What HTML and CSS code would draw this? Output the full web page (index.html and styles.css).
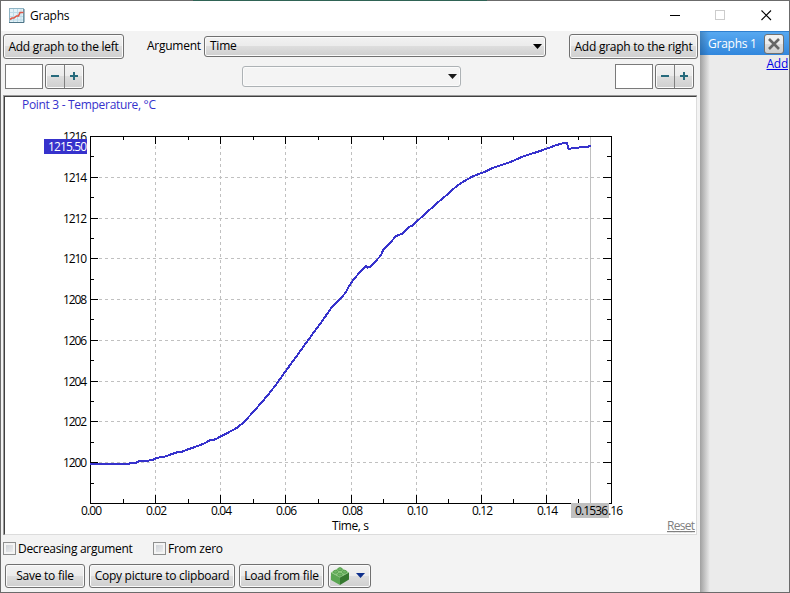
FILE: index.html
```html
<!DOCTYPE html>
<html lang="en">
<head>
    <meta charset="UTF-8">
    <title>Graphs</title>
    <link rel="stylesheet" href="styles.css">
</head>
<body>
    <div class="window">
        <div class="titlebar">
            <svg class="app-icon" width="16" height="16" viewBox="0 0 16 16">
                <rect x="0.5" y="0.5" width="14" height="14" fill="#e4f2f8" stroke="#8fb4c4"/>
                <path d="M4.5 1v13M8.5 1v13M12 1v13M1 4.5h13M1 8.5h13M1 12h13" stroke="#bddbe8" fill="none"/>
                <path d="M0 14.5h15V1" stroke="#4f7688" fill="none"/>
                <path d="M1 11.500l2-1.500h2l2.500-2h2l1.500-3.500h3.500" stroke="#dd5a48" stroke-width="1.600" fill="none"/>
            </svg>
            <span class="title">Graphs</span>
            <svg class="window-buttons" width="110" height="16" viewBox="0 0 110 16" fill="none">
                <path d="M0 7.500h10" stroke="#000"/>
                <rect x="45.500" y="2.500" width="9" height="9" stroke="#ccc"/>
                <path d="M91.500 2.500l9.500 9.500M101 2.500l-9.500 9.500" stroke="#000" stroke-width="1.100"/>
            </svg>
        </div>
        <div class="content">
            <div class="main">
                <div class="toolbar">
                    <button class="btn add-left">Add graph to the left</button>
                    <label class="argument">Argument</label>
                    <div class="combo">
                        <span>Time</span>
                        <svg width="9" height="5" viewBox="0 0 9 5"><path d="M0 0h9L4.500 5z" fill="#000"/></svg>
                    </div>
                    <button class="btn add-right">Add graph to the right</button>
                </div>
                <div class="toolbar second">
                    <div class="box"></div>
                    <div class="spin">
                        <svg width="18" height="23" viewBox="0 0 18 23"><path d="M5 11h8" stroke="#266a7c" stroke-width="2"/></svg>
                        <svg width="18" height="23" viewBox="0 0 18 23"><path d="M5 11h8M9 7v8" stroke="#266a7c" stroke-width="2"/></svg>
                    </div>
                    <div class="combo disabled">
                        <span></span>
                        <svg width="9" height="5" viewBox="0 0 9 5"><path d="M0 0h9L4.500 5z" fill="#1a1a1a"/></svg>
                    </div>
                    <div class="box"></div>
                    <div class="spin">
                        <svg width="18" height="23" viewBox="0 0 18 23"><path d="M5 11h8" stroke="#266a7c" stroke-width="2"/></svg>
                        <svg width="18" height="23" viewBox="0 0 18 23"><path d="M5 11h8M9 7v8" stroke="#266a7c" stroke-width="2"/></svg>
                    </div>
                </div>
                <div class="graph">
                    <svg class="chart" width="691" height="437" viewBox="5 97 691 437">
                        <text class="series" x="22" y="109" textLength="134">Point 3 - Temperature, °C</text>

                        <!-- grid -->
                        <path class="grid" d="M93 177.500H611M93 218.500H611M93 258.500H611M93 299.500H611M93 340.500H611M93 381.500H611M93 421.500H611M93 462.500H611"/>
                        <path class="grid" d="M155.500 140V503M220.500 140V503M285.500 140V503M351.500 140V503M416.500 140V503M481.500 140V503M546.500 140V503"/>

                        <!-- cursor -->
                        <path class="cursor" d="M590.500 137V503"/>

                        <!-- axes and ticks -->
                        <path class="axis" d="M90.500 136.500H611.500V503.500H90.500z"/>
                        <path class="axis" d="M91 177.500h7M91 218.500h7M91 258.500h7M91 299.500h7M91 340.500h7M91 381.500h7M91 421.500h7M91 462.500h7"/>
                        <path class="axis" d="M91 156.500h3M91 197.500h3M91 238.500h3M91 279.500h3M91 319.500h3M91 360.500h3M91 401.500h3M91 442.500h3M91 483.500h3"/>
                        <path class="axis" d="M611 177.500h-8M611 218.500h-8M611 258.500h-8M611 299.500h-8M611 340.500h-8M611 381.500h-8M611 421.500h-8M611 462.500h-8"/>
                        <path class="axis" d="M611 156.500h-4M611 197.500h-4M611 238.500h-4M611 279.500h-4M611 319.500h-4M611 360.500h-4M611 401.500h-4M611 442.500h-4M611 483.500h-4"/>
                        <path class="axis" d="M155.500 137v7M220.500 137v7M285.500 137v7M351.500 137v7M416.500 137v7M481.500 137v7M546.500 137v7"/>
                        <path class="axis" d="M123.500 137v3M188.500 137v3M253.500 137v3M318.500 137v3M383.500 137v3M448.500 137v3M513.500 137v3M578.500 137v3"/>
                        <path class="axis" d="M155.500 503v-8M220.500 503v-8M285.500 503v-8M351.500 503v-8M416.500 503v-8M481.500 503v-8M546.500 503v-8"/>
                        <path class="axis" d="M123.500 503v-4M188.500 503v-4M253.500 503v-4M318.500 503v-4M383.500 503v-4M448.500 503v-4M513.500 503v-4M578.500 503v-4"/>

                        <polyline class="curve" points="90,464 126,464 131,463.300 136,462.700 139,461.300 147,461 153,459.700 157,457.700 164,457 170,454.700 177,452.300 182,451.700 188,449.300 195,447 203,444 210,440.300 215.700,439.300 220.700,436.300 228,432.700 236.700,428 243,423 250,415.500 258,406.500 266.700,396.500 275,386 285,372 296.700,356 308,340.300 320,324 331.700,307.500 340,299 346,292.300 348.500,287 352,281.500 358.300,274 365.700,266 367.500,267.700 370.700,266.500 373.300,263.500 380.700,255.700 383.300,250 390,243 396,236 401.700,234 410,226.500 412.700,225.500 420,218.500 430,209.500 438.300,202 446.700,195 456.700,186 463.300,181.700 472,176.700 486.700,171 491.700,168.300 511.700,161.500 521.700,157 540,151 556.700,145 563,143.300 567,143 568.500,149 573,148 587,146.800 591,146"/>

                        <g class="labels">
                            <text x="63" y="141" textLength="24">1216</text>
                            <rect x="44" y="139" width="43" height="15" fill="#3632cc"/>
                            <text class="value" x="48" y="151" textLength="39">1215.50</text>
                            <text x="63" y="182" textLength="24">1214</text>
                            <text x="63" y="223" textLength="24">1212</text>
                            <text x="63" y="263" textLength="24">1210</text>
                            <text x="63" y="304" textLength="24">1208</text>
                            <text x="63" y="345" textLength="24">1206</text>
                            <text x="63" y="386" textLength="24">1204</text>
                            <text x="63" y="426" textLength="24">1202</text>
                            <text x="63" y="467" textLength="24">1200</text>

                            <text x="81" y="515" textLength="21">0.00</text>
                            <text x="146" y="515" textLength="21">0.02</text>
                            <text x="211" y="515" textLength="21">0.04</text>
                            <text x="276" y="515" textLength="21">0.06</text>
                            <text x="342" y="515" textLength="21">0.08</text>
                            <text x="407" y="515" textLength="21">0.10</text>
                            <text x="472" y="515" textLength="21">0.12</text>
                            <text x="537" y="515" textLength="21">0.14</text>
                            <rect x="571" y="503" width="38" height="15" fill="#c0c0c0"/>
                            <text x="575" y="515" textLength="33">0.1536</text>
                            <text x="608" y="515" textLength="15">.16</text>
                            <text x="332" y="530" textLength="37">Time, s</text>
                        </g>
                        <text class="reset" x="667" y="530" textLength="28">Reset</text>
                    </svg>
                </div>
                <div class="options">
                    <label class="check"><i></i><span class="decreasing">Decreasing argument</span></label>
                    <label class="check"><i></i><span>From zero</span></label>
                </div>
                <div class="actions">
                    <button class="btn save">Save to file</button>
                    <button class="btn copy">Copy picture to clipboard</button>
                    <button class="btn load">Load from file</button>
                    <button class="btn brick">
                        <svg width="40" height="20" viewBox="0 0 40 20">
                            <path d="M1 6.500L10 1l9 5.500-9 5z" fill="#8ecb80"/>
                            <path d="M1 6.500l9 5V19l-9-5z" fill="#5ba653"/>
                            <path d="M19 6.500l-9 5V19l9-5.500z" fill="#35782f"/>
                            <g fill="#70b766" stroke="#438b3c" stroke-width="0.600">
                                <ellipse cx="10" cy="3.200" rx="2.200" ry="1.500"/>
                                <ellipse cx="5.500" cy="5.800" rx="2.200" ry="1.500"/>
                                <ellipse cx="14.500" cy="5.800" rx="2.200" ry="1.500"/>
                                <ellipse cx="10" cy="8.600" rx="2.200" ry="1.500"/>
                            </g>
                            <path d="M26 7h9l-4.500 5z" fill="#0e2f8c"/>
                        </svg>
                    </button>
                </div>
            </div>
            <div class="side">
                <div class="tab">
                    <span>Graphs 1</span>
                    <div class="close">
                        <svg width="12" height="12" viewBox="0 0 12 12"><path d="M1 1l10 10M11 1L1 11" stroke="#666" stroke-width="2.600"/></svg>
                    </div>
                </div>
                <a class="add">Add</a>
            </div>
        </div>
    </div>
</body>
</html>
```
FILE: styles.css
```css
* {
    box-sizing: border-box;
}
body {
    margin: 0;
    font-family: "Open Sans", "Noto Sans", sans-serif;
    font-size: 12px;
    letter-spacing: -0.25px;
    color: #000;
    white-space: nowrap;
}
.window {
    width: 790px;
    height: 593px;
    border: 1px solid #6b6b6b;
    border-top: 0;
    display: flex;
    flex-direction: column;
    overflow: hidden;
}
.titlebar {
    height: 31px;
    background: linear-gradient(90deg, #6b6b6b 192px, #2f6355 192px, #2f6355 486px, #6b6b6b 486px) top / 100% 1px no-repeat #fff;
    display: flex;
    align-items: center;
    padding: 0 9px 0 8px;
}
.title {
    margin-left: 5px;
    flex: 1;
}
.content {
    flex: 1;
    display: flex;
    min-height: 0;
}
.main {
    width: 699px;
    background: #f3f3f3;
    display: flex;
    flex-direction: column;
}
.toolbar {
    height: 29px;
    padding: 2px 2px 0 2px;
    display: flex;
    align-items: center;
    flex-shrink: 0;
}
.second {
    height: 35px;
    padding: 0 6px 3px 4px;
}
.btn {
    font: inherit;
    letter-spacing: inherit;
    height: 25px;
    padding: 0 0 1px;
    border: 1px solid #707070;
    border-radius: 3px;
    background: linear-gradient(#f2f2f2 0, #ebebeb 50%, #dddddd 50%, #cfcfcf 100%);
    box-shadow: inset 0 0 0 1px #fbfbfb;
    color: #000;
}
.add-left {
    width: 121px;
}
.argument {
    margin-left: 23px;
    width: 57px;
    padding-bottom: 2px;
}
.combo {
    width: 342px;
    height: 21px;
    border: 1px solid #707070;
    border-radius: 3px;
    background: linear-gradient(#f2f2f2 0, #ebebeb 50%, #dddddd 50%, #cfcfcf 100%);
    box-shadow: inset 0 0 0 1px #fbfbfb;
    display: flex;
    align-items: center;
    justify-content: space-between;
    padding: 0 3px 0 5px;
}
.combo span {
    padding-bottom: 2px;
}
.combo.disabled {
    width: 219px;
    margin: 0 154px 0 158px;
    border-color: #adb2b5;
    background: #f4f4f4;
}
.add-right {
    width: 129px;
    margin-left: auto;
}
.box {
    width: 38px;
    height: 25px;
    border: 1px solid #7a7a7a;
    background: #fff;
    margin-right: 2px;
}
.spin {
    width: 39px;
    height: 25px;
    border: 1px solid #707070;
    border-radius: 3px;
    background: linear-gradient(#f2f2f2 0, #ebebeb 50%, #dddddd 50%, #cfcfcf 100%);
    box-shadow: inset 0 0 0 1px #fbfbfb;
    display: flex;
}
.spin svg + svg {
    border-left: 1px solid #808080;
    width: 19px;
}
.graph {
    width: 694px;
    height: 440px;
    margin-left: 2px;
    border: 1px solid #9a9a9a;
    border-right: 0;
    border-bottom: 0;
    flex-shrink: 0;
}
.chart {
    display: block;
    box-sizing: content-box;
    background: #fff;
    border: 1px solid #404040;
    border-right-color: #dcdcdc;
    border-bottom-color: #dcdcdc;
}
.chart text {
    letter-spacing: 0;
}
.series {
    fill: #3632cc;
}
.grid {
    stroke: #c0c0c0;
    stroke-dasharray: 3 3;
    fill: none;
    shape-rendering: crispEdges;
}
.cursor {
    stroke: #c0c0c0;
}
.axis {
    stroke: #000;
    fill: none;
    shape-rendering: crispEdges;
}
.curve {
    stroke: #3632cc;
    stroke-width: 2;
    fill: none;
    shape-rendering: crispEdges;
}
.value {
    fill: #fff;
}
.reset {
    fill: #808080;
    text-decoration: underline;
}
.options {
    height: 27px;
    display: flex;
    align-items: center;
    padding-left: 2px;
    gap: 22px;
    flex-shrink: 0;
}
.check {
    display: flex;
    align-items: center;
    gap: 2px;
}
.check i {
    width: 13px;
    height: 13px;
    border: 1px solid #8e8f8f;
    background: linear-gradient(135deg, #c6cbd1, #f4f4f4);
    box-shadow: inset 0 0 0 2px #f4f4f4;
}
.decreasing {
    width: 113px;
    letter-spacing: -0.3px;
}
.actions {
    display: flex;
    gap: 4px;
    padding: 2px 0 0 4px;
}
.actions .btn {
    height: 24px;
}
.save {
    width: 80px;
}
.copy {
    width: 146px;
}
.load {
    width: 85px;
}
.actions .brick {
    width: 43px;
    display: flex;
    align-items: center;
    justify-content: center;
    padding: 0 0 0 1px;
}
.side {
    flex: 1;
    background: linear-gradient(90deg, #a0a0a0, #ebebeb 10px);
    display: flex;
    flex-direction: column;
}
.tab {
    height: 24px;
    background: linear-gradient(90deg, rgba(0, 0, 0, 0.2), transparent 9px), linear-gradient(#57a8f0, #3187dd);
    border-top: 1px solid #2f7fce;
    color: #fff;
    display: flex;
    align-items: center;
    justify-content: space-between;
    padding: 0 5px 0 8px;
}
.tab span {
    padding-bottom: 1px;
}
.close {
    width: 20px;
    height: 20px;
    border: 1px solid #707070;
    border-radius: 3px;
    background: linear-gradient(#f2f2f2 0, #ebebeb 50%, #dddddd 50%, #cfcfcf 100%);
    display: flex;
    align-items: center;
    justify-content: center;
}
.add {
    align-self: flex-end;
    margin-right: 1px;
    color: #0000e6;
    text-decoration: underline;
}
```
